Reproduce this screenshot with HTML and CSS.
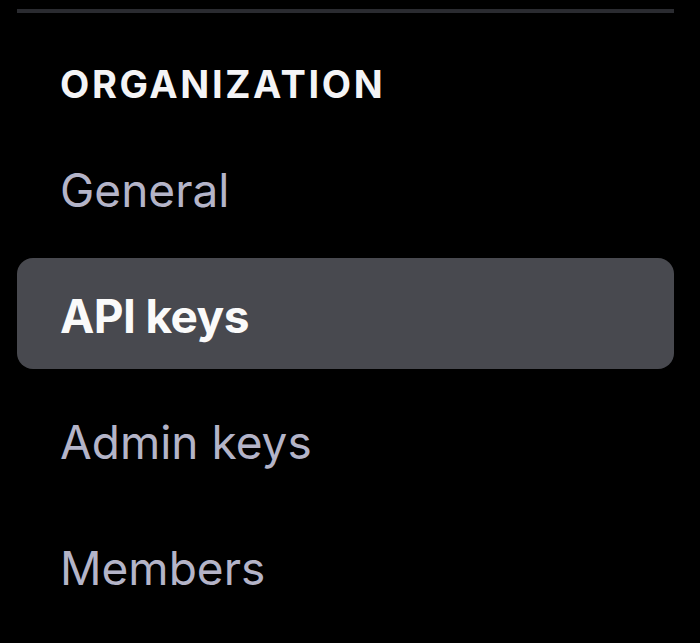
FILE: index.html
```html
<!DOCTYPE html>
<html lang="en">
<head>
  <meta charset="UTF-8" />
  <title>Organization settings</title>
  <link rel="stylesheet" href="styles.css">
</head>
<body>
  <nav class="sidebar">
    <div class="divider"></div>
    <div class="section-title">ORGANIZATION</div>
    <ul class="nav-list">
      <li class="nav-item">General</li>
      <li class="nav-item active">API keys</li>
      <li class="nav-item">Admin keys</li>
      <li class="nav-item">Members</li>
    </ul>
  </nav>
</body>
</html>
```

FILE: styles.css
```css
html, body {
  height: 100%;
  margin: 0;
  background: #000;
  font-family: Inter, 'Noto Sans', sans-serif;
  overflow: hidden;
}

.sidebar {
  padding: 9px 26px 0 17px;
}

.divider {
  height: 4px;
  background: #2a2b30;
}

.section-title {
  margin-top: 48px;
  padding-left: 43px;
  font-size: 38px;
  line-height: 46px;
  font-weight: 700;
  letter-spacing: 2.6px;
  color: #f4f4f6;
}

.nav-list {
  list-style: none;
  margin: 25px 0 0;
  padding: 0;
  display: flex;
  flex-direction: column;
  gap: 15px;
}

.nav-item {
  box-sizing: border-box;
  height: 111px;
  display: flex;
  align-items: center;
  padding: 5px 0 0 43px;
  border-radius: 16px;
  font-size: 46px;
  color: #b4b4c8;
}

.nav-item.active {
  background: #48494f;
  color: #fafafa;
  font-weight: 700;
  letter-spacing: -0.6px;
}
```
